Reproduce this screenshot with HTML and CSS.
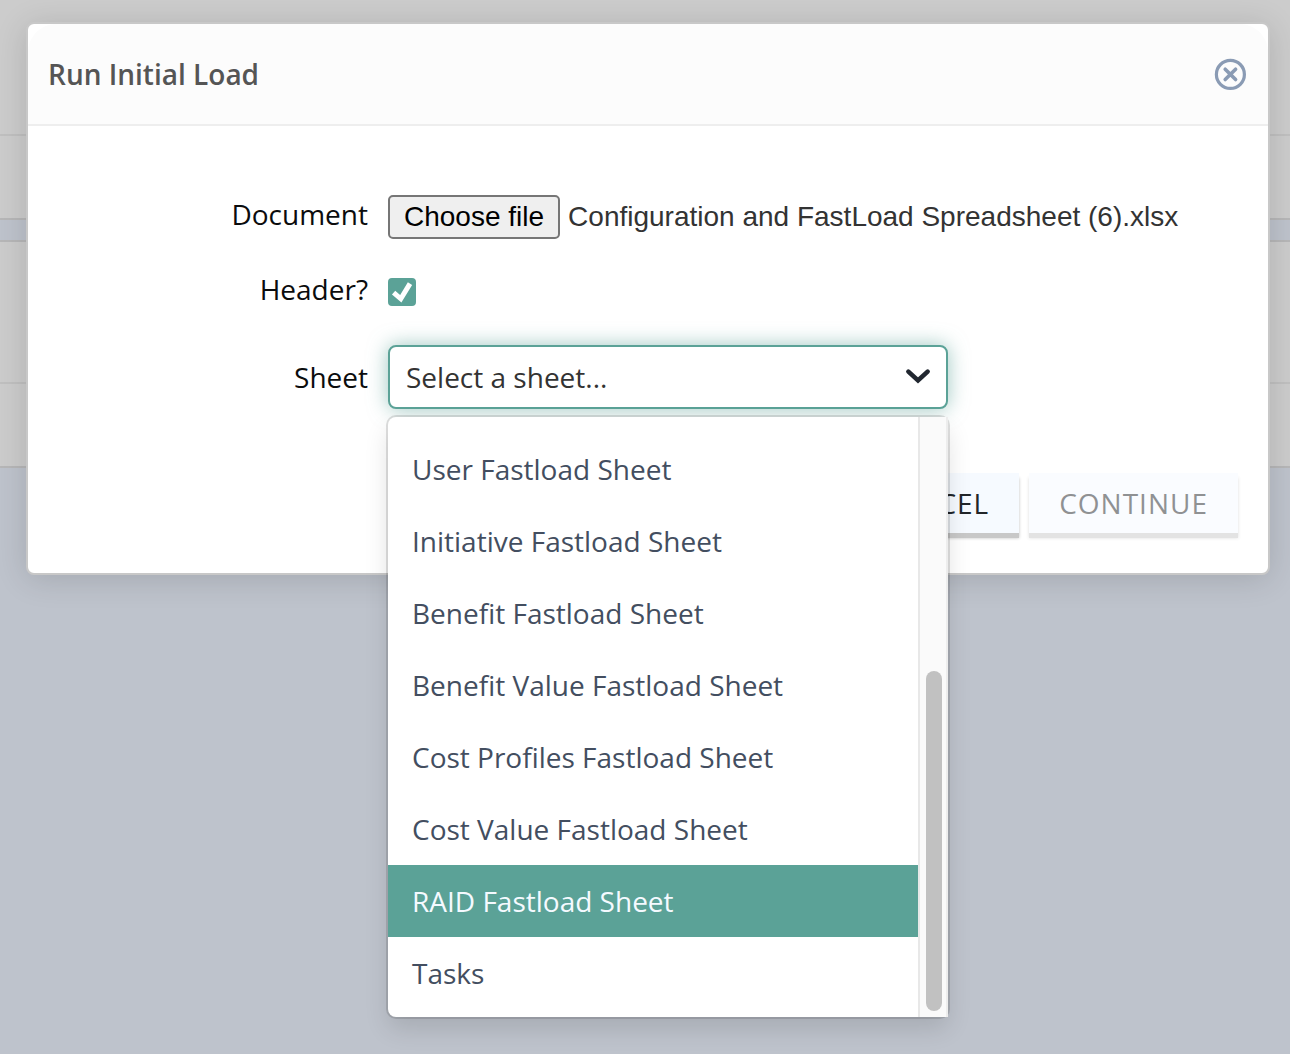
FILE: index.html
```html
<!DOCTYPE html>
<html lang="en">
<head>
<meta charset="UTF-8">
<meta name="viewport" content="width=device-width, initial-scale=1.0">
<title>Run Initial Load</title>
<link rel="stylesheet" href="styles.css">
</head>
<body>

<div class="page" aria-hidden="true">
  <div class="panel">
    <div class="panel-top"></div>
    <div class="panel-bottom"></div>
  </div>
  <div class="panel">
    <div class="panel-top"></div>
    <div class="panel-bottom"></div>
  </div>
</div>

<div class="overlay">
  <div class="modal" role="dialog" aria-labelledby="modalTitle">
    <div class="modal-header">
      <h1 id="modalTitle">Run Initial Load</h1>
      <button type="button" class="close-modal" aria-label="Close">
        <svg width="32" height="32" viewBox="0 0 32 32" fill="none" stroke="currentColor">
          <circle cx="16.4" cy="16.4" r="14" stroke-width="3.2"/>
          <path d="M11.2 11.2l10.4 10.4M21.6 11.2L11.2 21.6" stroke-width="3.6" stroke-linecap="round"/>
        </svg>
      </button>
    </div>

    <form class="modal-body">
      <div class="form-row">
        <label class="row-label row-label-top" for="document">Document</label>
        <div class="file-field">
          <input type="file" id="document" class="file-input" tabindex="-1">
          <button type="button" class="file-btn" id="chooseFile">Choose file</button>
          <span class="file-name" id="fileName">Configuration and FastLoad Spreadsheet (6).xlsx</span>
        </div>
      </div>

      <div class="form-row header-row">
        <label class="row-label row-label-top" for="header">Header?</label>
        <div class="check-field">
          <input type="checkbox" id="header" class="checkbox" checked>
          <svg class="check-mark" viewBox="0 0 28 28" fill="none" stroke="#fff" stroke-width="5">
            <path d="M5.6 14.6l7.2 6.2L22 5.6"/>
          </svg>
        </div>
      </div>

      <div class="form-row sheet-row">
        <label class="row-label" for="sheet">Sheet</label>
        <div class="select-field">
          <select id="sheet" class="select">
            <option>Select a sheet...</option>
          </select>
          <svg class="chevron" width="28" height="20" viewBox="0 0 28 20" fill="none" stroke="#212730" stroke-width="4.6" stroke-linecap="round">
            <path d="M4.4 5.6l9.6 8.8 9.6-8.8"/>
          </svg>
          <div class="menu">
            <ul class="options" role="listbox" aria-label="Sheets">
              <li class="option" role="option">User Fastload Sheet</li>
              <li class="option" role="option">Initiative Fastload Sheet</li>
              <li class="option" role="option">Benefit Fastload Sheet</li>
              <li class="option" role="option">Benefit Value Fastload Sheet</li>
              <li class="option" role="option">Cost Profiles Fastload Sheet</li>
              <li class="option" role="option">Cost Value Fastload Sheet</li>
              <li class="option active" role="option" aria-selected="true">RAID Fastload Sheet</li>
              <li class="option" role="option">Tasks</li>
            </ul>
            <div class="scrollbar">
              <div class="thumb"></div>
            </div>
          </div>
        </div>
      </div>

      <div class="actions">
        <button type="button" class="btn">CANCEL</button>
        <button type="submit" class="btn" disabled>CONTINUE</button>
      </div>
    </form>
  </div>
</div>

<script>
const fileInput = document.getElementById('document');

document.getElementById('chooseFile').onclick = () => fileInput.click();

fileInput.onchange = () => {
  if (fileInput.files.length) {
    document.getElementById('fileName').textContent = fileInput.files[0].name;
  }
};
</script>
</body>
</html>
```
FILE: styles.css
```css
* {
  margin: 0;
  padding: 0;
  box-sizing: border-box;
}

body {
  background: #bec3cc;
  color: #0b0c0d;
  min-height: 100vh;
  font-family: "Open Sans", sans-serif;
  font-size: 28px;
  line-height: 40px;
}

/* dimmed page behind the dialog */
.page {
  display: flex;
  flex-direction: column;
  gap: 20px;
}

.panel {
  background: #ccc;
  border-bottom: 2px solid #b7b7b8;
}

.panel + .panel {
  border-top: 2px solid #b7b7b8;
}

.panel-top {
  height: 142px;
  border-bottom: 2px solid #c0c0c0;
}

.panel:first-child .panel-top {
  height: 136px;
}

.panel-bottom {
  height: 82px;
}

.overlay {
  position: absolute;
  top: 0;
  left: 0;
  right: 0;
  padding: 22px 20px 0 26px;
}

.modal {
  background: #fff;
  border: 2px solid #c8c8c8;
  border-radius: 8px;
  box-shadow: 0 4px 32px rgba(0, 0, 0, 0.14);
}

.modal-header {
  display: flex;
  align-items: center;
  justify-content: space-between;
  height: 102px;
  padding: 0 22px 0 20px;
  background: #fcfcfc;
  border-bottom: 2px solid #eee;
  border-radius: 28px 28px 0 0;
}

.modal-header h1 {
  font-size: 28px;
  font-weight: 600;
  color: #555;
}

.close-modal {
  display: flex;
  background: none;
  border: none;
  color: #8a9bb4;
  cursor: pointer;
}

.close-modal svg {
  overflow: visible;
}

.modal-body {
  padding: 68px 30px 40px 0;
}

.form-row {
  display: grid;
  grid-template-columns: 340px 1fr;
  column-gap: 20px;
  align-items: center;
}

.row-label {
  text-align: right;
}

.row-label-top {
  padding-bottom: 6px;
}

.file-field {
  position: relative;
  display: flex;
  align-items: center;
  gap: 8px;
  font-family: "Liberation Sans", Arial, sans-serif;
}

.file-input {
  position: absolute;
  width: 1px;
  height: 1px;
  opacity: 0;
}

.file-btn {
  height: 44px;
  padding: 0 14px;
  font: inherit;
  line-height: 40px;
  color: #000;
  background: #efefef;
  border: 2px solid #767676;
  border-radius: 5px;
}

.file-name {
  color: #333;
}

.header-row {
  margin-top: 29px;
}

.check-field {
  position: relative;
  display: flex;
}

.checkbox {
  appearance: none;
  width: 28px;
  height: 28px;
  background: #fff;
  border: 2px solid #5ba297;
  border-radius: 4px;
}

.checkbox:checked {
  background: #5ba297;
}

.check-mark {
  position: absolute;
  top: 0;
  left: 0;
  width: 28px;
  height: 28px;
  pointer-events: none;
}

.checkbox:not(:checked) + .check-mark {
  display: none;
}

.sheet-row {
  margin-top: 30px;
}

.select-field {
  position: relative;
  max-width: 560px;
}

.select {
  display: block;
  appearance: none;
  width: 100%;
  height: 64px;
  padding: 0 16px;
  font: inherit;
  color: #333;
  background: #fff;
  border: 2px solid #5ba297;
  border-radius: 8px;
  box-shadow: 0 0 20px rgba(91, 162, 151, 0.6);
  outline: none;
}

.chevron {
  position: absolute;
  top: 21px;
  right: 16px;
  pointer-events: none;
}

.menu {
  position: absolute;
  top: 100%;
  left: 0;
  right: 0;
  z-index: 10;
  display: flex;
  margin-top: 8px;
  background: #fff;
  border-radius: 8px;
  box-shadow: 0 0 0 2px rgba(0, 0, 0, 0.12), 0 12px 24px rgba(0, 0, 0, 0.12);
}

.options {
  flex: 1;
  list-style: none;
  padding: 16px 0 8px;
}

.option {
  padding: 16px 24px;
  color: #434e60;
  cursor: pointer;
}

.option.active {
  background: #5ba297;
  color: #f5faff;
}

.scrollbar {
  display: flex;
  align-items: flex-end;
  justify-content: center;
  width: 30px;
  padding: 0 0 6px 2px;
  background: #fafafa;
  border-left: 2px solid #e8e8e8;
  border-right: 2px solid #ededed;
}

.thumb {
  width: 16px;
  height: 340px;
  background: #c1c1c1;
  border-radius: 8px;
}

.actions {
  display: flex;
  justify-content: flex-end;
  gap: 10px;
  margin-top: 64px;
}

.btn {
  height: 60px;
  padding: 0 30px;
  font: inherit;
  letter-spacing: 1px;
  color: #212529;
  background: #f6faff;
  border: none;
  box-shadow: 0 5px 0 #c8c8c8, 0 5px 3px rgba(0, 0, 0, 0.25);
  cursor: pointer;
}

.btn:disabled {
  opacity: 0.5;
  cursor: default;
}
```
